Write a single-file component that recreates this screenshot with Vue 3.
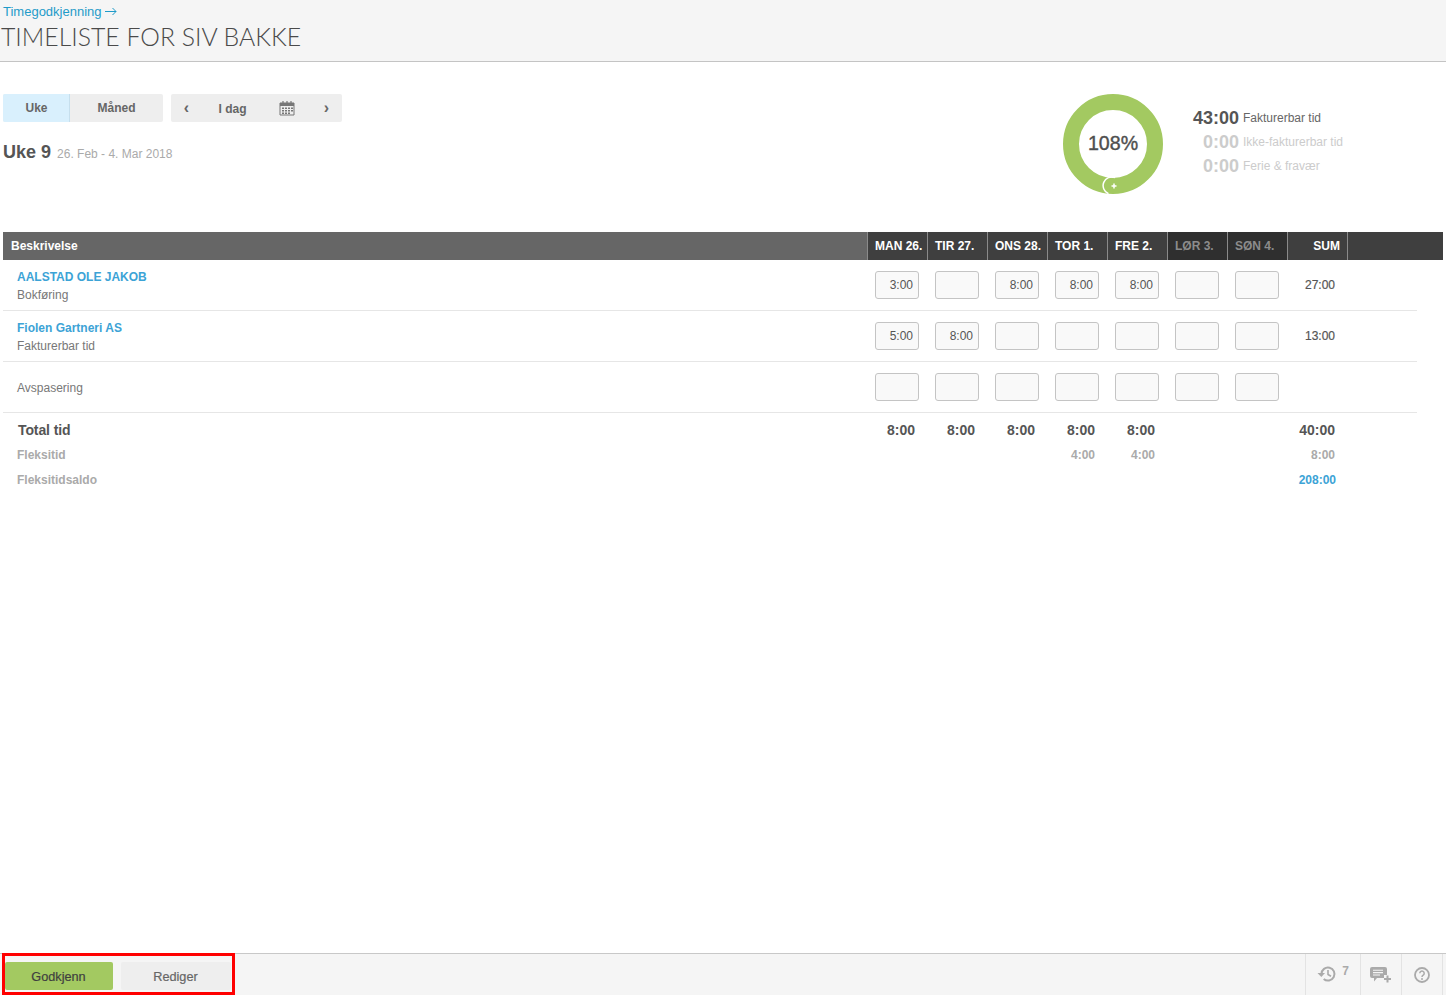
<script setup>
const days = [
  { label: 'MAN 26.' }, { label: 'TIR 27.' }, { label: 'ONS 28.' }, { label: 'TOR 1.' },
  { label: 'FRE 2.' }, { label: 'LØR 3.', weekend: true }, { label: 'SØN 4.', weekend: true }
]
const rows = [
  { link: 'AALSTAD OLE JAKOB', sub: 'Bokføring', vals: ['3:00', '', '8:00', '8:00', '8:00', '', ''], sum: '27:00' },
  { link: 'Fiolen Gartneri AS', sub: 'Fakturerbar tid', vals: ['5:00', '8:00', '', '', '', '', ''], sum: '13:00' },
  { link: '', sub: 'Avspasering', vals: ['', '', '', '', '', '', ''], sum: '' }
]
const totals = [
  { cls: 'total', label: 'Total tid', vals: ['8:00', '8:00', '8:00', '8:00', '8:00', '', ''], sum: '40:00' },
  { cls: 'flex', label: 'Fleksitid', vals: ['', '', '', '4:00', '4:00', '', ''], sum: '8:00' },
  { cls: 'flex saldo', label: 'Fleksitidsaldo', vals: ['', '', '', '', '', '', ''], sum: '208:00' }
]
const stats = [
  { time: '43:00', label: 'Fakturerbar tid', active: true },
  { time: '0:00', label: 'Ikke-fakturerbar tid' },
  { time: '0:00', label: 'Ferie & fravær' }
]
</script>

<template>
  <div class="page">
    <header class="top">
      <a class="crumb">Timegodkjenning
        <svg class="arrow" width="12" height="9" viewBox="0 0 12 9">
          <path d="M0 4.5h11M7.5 1l3.5 3.5L7.5 8" fill="none" stroke="#1f9bc9" stroke-width="1" />
        </svg>
      </a>
      <h1 class="title">TIMELISTE FOR SIV BAKKE</h1>
    </header>

    <main class="main">
      <section class="summary">
        <div class="controls">
          <div class="toolbar">
            <div class="seg">
              <span class="seg-btn on">Uke</span>
              <span class="seg-btn month">Måned</span>
            </div>
            <div class="nav">
              <span class="chev">‹</span>
              <span class="today">I dag</span>
              <svg class="cal" width="16" height="16" viewBox="0 0 16 16">
                <path d="M1 3h14v12H1z" fill="none" stroke="#777" stroke-width="1" />
                <path d="M1 3h14v3H1z" fill="#777" />
                <path d="M4 1v3M8 1v3M12 1v3" stroke="#777" stroke-width="1.2" />
                <path d="M3 7.5h2v1.5H3zM6 7.5h2v1.5H6zM9 7.5h2v1.5H9zM12 7.5h2v1.5h-2zM3 10h2v1.5H3zM6 10h2v1.5H6zM9 10h2v1.5H9zM12 10h2v1.5h-2zM3 12.5h2V14H3zM6 12.5h2V14H6zM9 12.5h2V14H9z" fill="#777" />
              </svg>
              <span class="chev right">›</span>
            </div>
          </div>
          <div class="week"><strong>Uke 9</strong><span>26. Feb - 4. Mar 2018</span></div>
        </div>

        <div class="chart">
          <svg class="donut" width="100" height="100" viewBox="0 0 100 100">
            <circle cx="50" cy="50" r="42" fill="none" stroke="#a3c961" stroke-width="16" />
            <path d="M52 83.6A8.6 8.6 0 0 0 45.5 99.6" fill="none" stroke="#fff" stroke-width="1.5" />
            <path d="M51 89.5v5M48.5 92h5" stroke="#fff" stroke-width="1.5" />
          </svg>
          <span class="pct">108%</span>
        </div>

        <ul class="stats">
          <li v-for="s in stats" :key="s.label" :class="{ active: s.active }">
            <b>{{ s.time }}</b><span>{{ s.label }}</span>
          </li>
        </ul>
      </section>

      <section class="table">
        <div class="thead">
          <div class="th-desc">Beskrivelse</div>
          <div v-for="d in days" :key="d.label" class="th-day" :class="{ weekend: d.weekend }">{{ d.label }}</div>
          <div class="th-sum">SUM</div>
          <div class="th-fill"></div>
        </div>

        <div v-for="r in rows" :key="r.sub" class="row">
          <div class="desc">
            <a v-if="r.link" class="link">{{ r.link }}</a>
            <span class="sub">{{ r.sub }}</span>
          </div>
          <div v-for="(v, i) in r.vals" :key="i" class="cell">
            <div class="input">{{ v }}</div>
          </div>
          <div class="sum">{{ r.sum }}</div>
        </div>

        <div v-for="t in totals" :key="t.label" class="tot" :class="t.cls">
          <div class="tot-label">{{ t.label }}</div>
          <div v-for="(v, i) in t.vals" :key="i" class="tot-val">{{ v }}</div>
          <div class="tot-sum">{{ t.sum }}</div>
        </div>
      </section>
    </main>

    <footer class="foot">
      <div class="actions">
        <button class="btn approve">Godkjenn</button>
        <button class="btn edit">Rediger</button>
        <div class="mark"></div>
      </div>
      <div class="tools">
        <div class="tool history">
          <svg width="20" height="18" viewBox="0 0 20 18">
            <path d="M4.5 9a6.5 6.5 0 1 1 2.2 4.9" fill="none" stroke="#aaa" stroke-width="2" />
            <path d="M0.5 8h7.5l-3.7 4z" fill="#aaa" />
            <path d="M11 5v4.5l3 1.8" fill="none" stroke="#aaa" stroke-width="1.6" />
          </svg>
          <span>7</span>
        </div>
        <div class="tool chat">
          <svg width="22" height="16" viewBox="0 0 22 16">
            <path d="M2 0h13a2 2 0 0 1 2 2v6h-3v3H7l-3 3.5V11H2a2 2 0 0 1-2-2V2a2 2 0 0 1 2-2z" fill="#aaa" />
            <path d="M3 3.2h10M3 5.6h10M3 8h7" stroke="#f5f5f5" stroke-width="1.1" />
            <path d="M17.5 8.5v7M14 12h7" stroke="#aaa" stroke-width="2" />
          </svg>
        </div>
        <div class="tool help">
          <svg width="16" height="16" viewBox="0 0 16 16">
            <circle cx="8" cy="8" r="7" fill="none" stroke="#aaa" stroke-width="1.8" />
            <path d="M5.8 6.2a2.2 2.2 0 1 1 3.4 1.9c-.8.5-1.2.9-1.2 1.9" fill="none" stroke="#aaa" stroke-width="1.5" />
            <circle cx="8" cy="12" r="1" fill="#aaa" />
          </svg>
        </div>
      </div>
    </footer>
  </div>
</template>

<style>
html, body { margin: 0; background: #fff; }
</style>

<style scoped>
.page {
  height: 995px;
  display: flex;
  flex-direction: column;
  font-family: "Liberation Sans", Arial, sans-serif;
  color: #555;
  overflow: hidden;
}
.top {
  height: 62px;
  flex: none;
  box-sizing: border-box;
  background: #f5f5f5;
  border-bottom: 1px solid #c4c4c4;
  padding: 4px 0 0 1px;
}
.crumb {
  display: block;
  margin-left: 2px;
  font-size: 13px;
  line-height: 15px;
  color: #1f9bc9;
  white-space: nowrap;
}
.arrow { margin-left: 0; }
.title {
  margin: 2px 0 0;
  font-family: Lato, sans-serif;
  font-weight: 300;
  font-size: 24.8px;
  line-height: 32px;
  color: #4a4a4a;
}
.main { flex: 1; padding: 32px 3px 0; min-height: 0; }
.summary { display: flex; height: 138px; }
.controls { width: 1060px; flex: none; }
.toolbar { display: flex; gap: 8px; }
.seg { display: flex; width: 160px; height: 28px; border-radius: 2px; overflow: hidden; background: #eee; }
.seg-btn {
  font-size: 12px; font-weight: 700; color: #666; line-height: 28px; text-align: center;
}
.seg-btn.on { width: 67px; box-sizing: border-box; padding-left: 1px; background: #d9f0fd; border-right: 1px solid #c6dfed; }
.seg-btn.month { flex: 1; }
.nav {
  display: flex; align-items: center; width: 171px; height: 28px; background: #eee; border-radius: 2px; position: relative;
}
.chev { font-size: 16px; font-weight: 700; color: #666; width: 31px; text-align: center; line-height: 26px; }
.chev.right { margin-left: 1px; }
.today { width: 61px; text-align: center; font-size: 12px; font-weight: 700; color: #666; padding-top: 1px; }
.cal { margin: 0 15px 0 16px; }
.week { margin-top: 20px; height: 20px; display: flex; align-items: baseline; gap: 6px; }
.week strong { font-size: 18px; color: #555; }
.week span { font-size: 12px; color: #aaa; }
.chart { position: relative; width: 100px; height: 100px; flex: none; }
.donut { display: block; }
.pct {
  position: absolute; left: 0; right: 0; top: 38px; text-align: center; font-size: 19.6px; line-height: 23px; color: #4f4f4f; font-weight: 400; -webkit-text-stroke: 0.4px #4f4f4f;
}
.stats { list-style: none; margin: 12px 0 0 30px; padding: 0; width: 200px; }
.stats li { display: flex; align-items: center; height: 24px; color: #ccc; }
.stats b { width: 46px; text-align: right; font-size: 18px; line-height: 24px; color: #ccc; }
.stats span { margin-left: 4px; font-size: 12px; line-height: 24px; color: #ccc; }
.stats li.active b { color: #555; }
.stats li.active span { color: #666; }
.thead {
  display: flex; height: 28px; color: #fff; font-size: 12px; font-weight: 700; line-height: 28px;
  background: #3f3f3f;
}
.th-desc { width: 856px; padding-left: 8px; background: #666; }
.th-day, .th-sum {
  width: 60px; box-sizing: border-box; border-left: 1px solid #8a8a8a; padding-left: 7px; background: #3f3f3f; white-space: nowrap;
}
.th-day.weekend { background: #2f2f2f; color: #8c8c8c; }
.th-sum { text-align: right; padding: 0 7px 0 0; }
.th-fill { flex: 1; border-left: 1px solid #8a8a8a; }
.row {
  display: flex; height: 50px; width: 1414px; border-bottom: 1px solid #e6e6e6; align-items: center;
}
.desc { width: 864px; padding: 1px 0 0 14px; box-sizing: border-box; flex: none; display: flex; flex-direction: column; }
.link { font-size: 12px; font-weight: 700; color: #3ca3d6; line-height: 18px; }
.sub { font-size: 12px; color: #777; line-height: 18px; }
.cell { width: 60px; flex: none; padding-left: 8px; box-sizing: border-box; }
.input {
  width: 44px; height: 28px; box-sizing: border-box; border: 1px solid #c4c4c4; border-radius: 3px; background: #f9f9f9;
  font-size: 12px; color: #555; text-align: right; line-height: 26px; padding-right: 5px;
}
.sum { width: 48px; flex: none; text-align: right; font-size: 12px; color: #555; font-weight: 400; -webkit-text-stroke: 0.2px #555; }
.tot { display: flex; width: 1414px; align-items: center; height: 25px; font-size: 12px; font-weight: 700; color: #aaa; }
.tot-label { width: 864px; flex: none; padding-left: 14px; box-sizing: border-box; }
.tot-val { width: 60px; flex: none; text-align: right; padding-right: 12px; box-sizing: border-box; }
.tot-sum { width: 48px; flex: none; text-align: right; }
.tot.total { color: #555; font-size: 14px; height: 29px; padding-top: 4px; box-sizing: border-box; }
.tot.total .tot-label { padding-left: 15px; letter-spacing: -0.1px; }
.saldo .tot-sum { color: #3ca3d6; margin-left: 1px; }
.foot {
  height: 42px; box-sizing: border-box; flex: none; display: flex; justify-content: space-between;
  background: #f5f5f5; border-top: 1px solid #c8c8c8;
}
.actions { position: relative; display: flex; gap: 8px; padding: 8px 0 0 5px; }
.btn {
  height: 28px; border: 0; border-radius: 2px; font: 400 12.7px "Liberation Sans", sans-serif; padding: 2px 1px 0 0;
  -webkit-text-stroke: 0.2px currentColor;
}
.approve { width: 108px; background: #a3c961; color: #3f3f3f; }
.edit { width: 110px; background: #eee; color: #666; }
.mark {
  position: absolute; left: 2px; top: -1px; width: 233px; height: 42px; box-sizing: border-box; border: 3px solid #f00; pointer-events: none;
}
.tools { display: flex; margin-right: 3px; border-right: 1px solid #e3e3e3; }
.tool {
  display: flex; align-items: center; justify-content: center; border-left: 1px solid #e3e3e3; box-sizing: border-box;
}
.history { width: 55px; color: #aaa; font-size: 12px; font-weight: 700; gap: 5px; padding-bottom: 1px; }
.history span { margin-top: -6px; }
.chat { width: 41px; }
.help { width: 41px; }
</style>
